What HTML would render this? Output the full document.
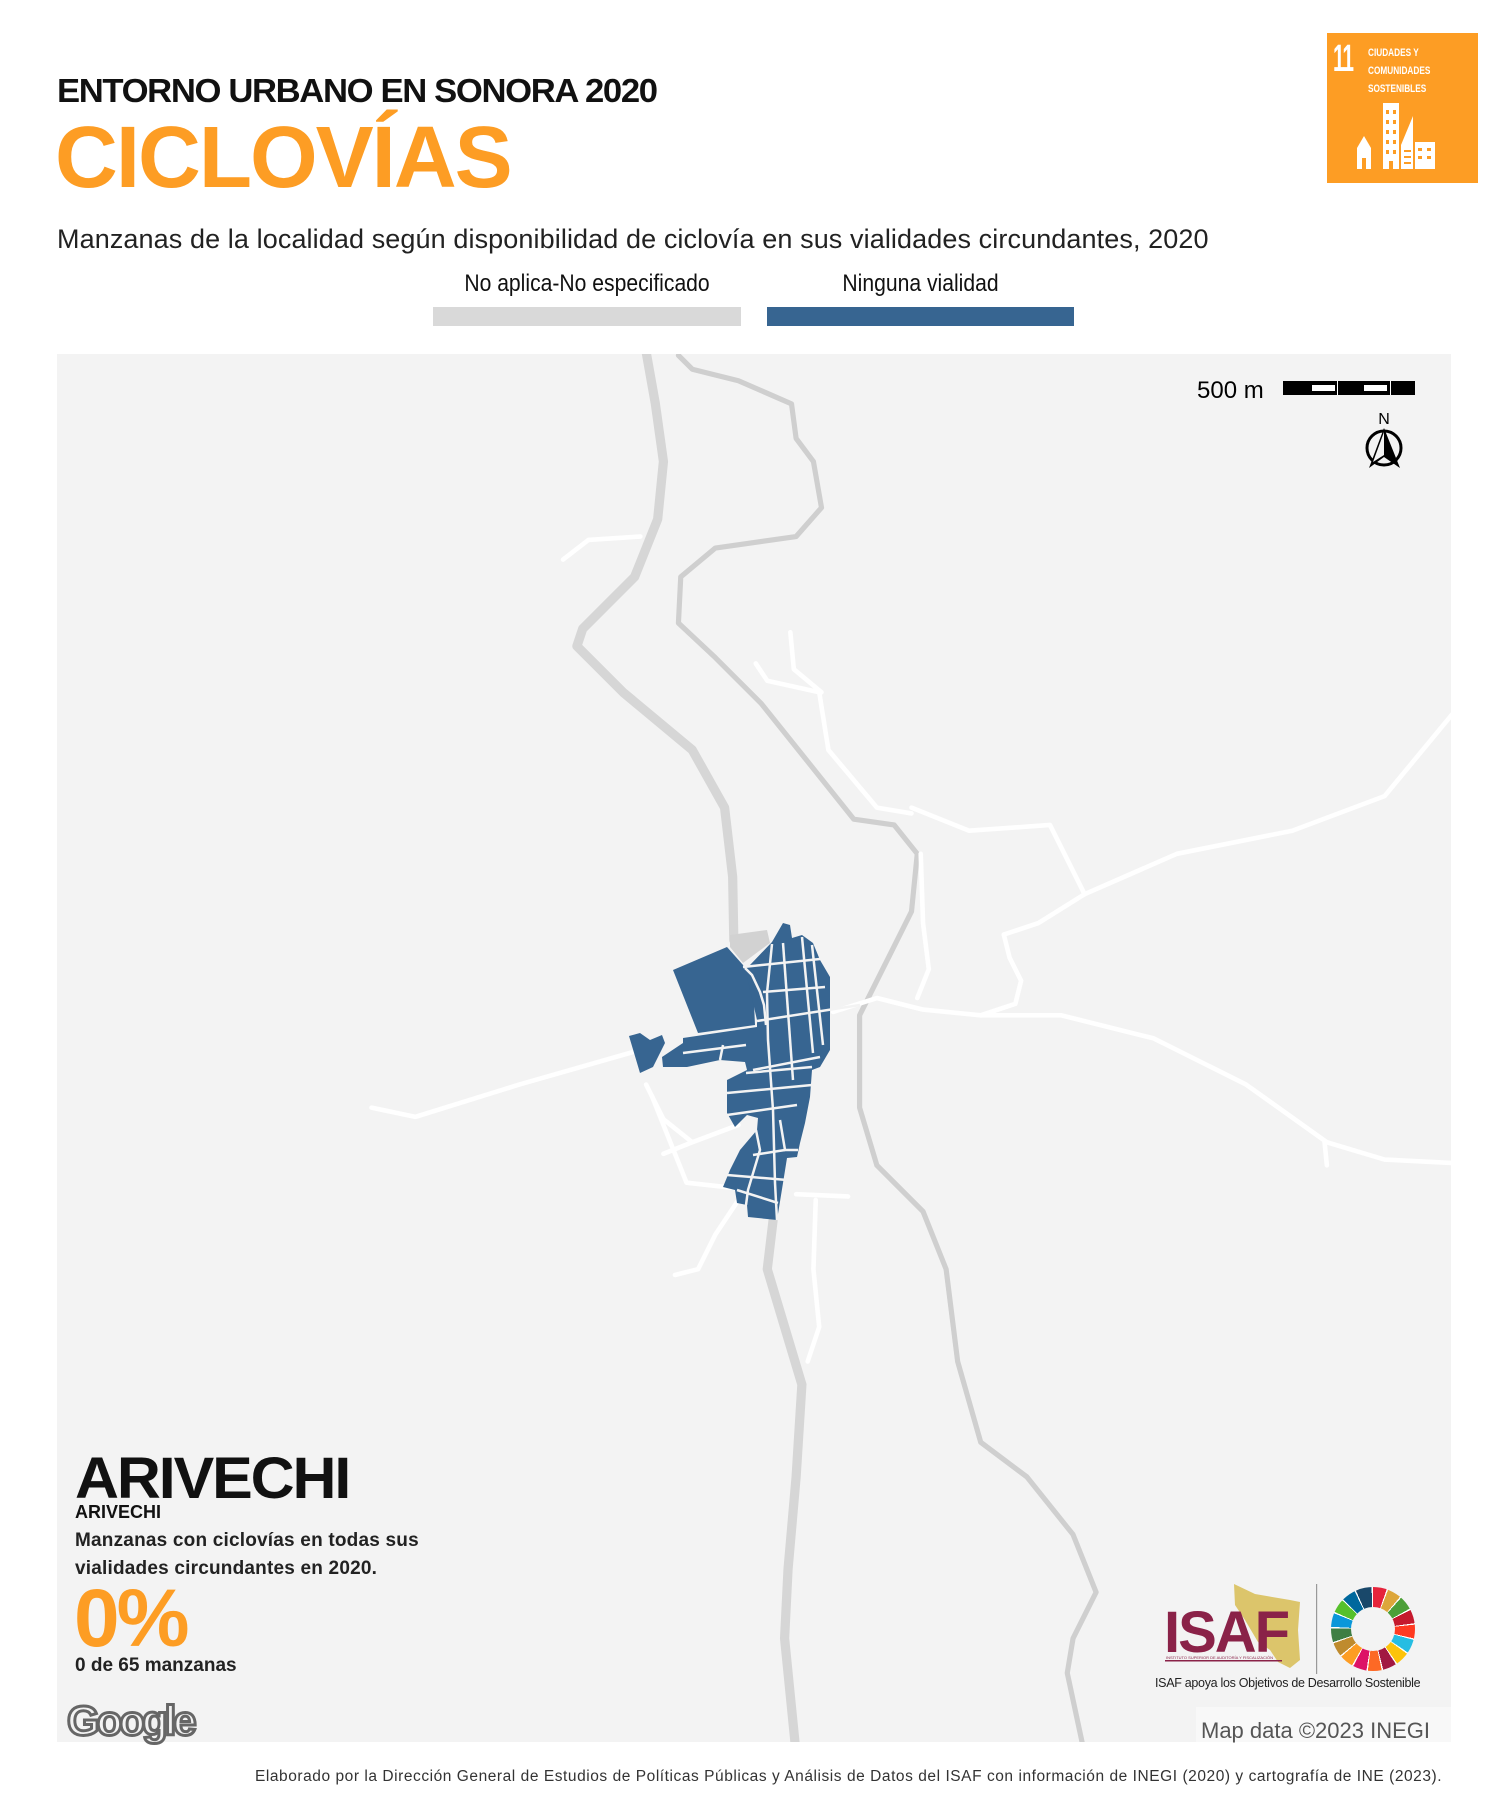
<!DOCTYPE html>
<html><head><meta charset="utf-8"><style>
*{margin:0;padding:0;box-sizing:border-box}
body{width:1500px;height:1800px;background:#fff;position:relative;overflow:hidden;font-family:"Liberation Sans",sans-serif}
.a{position:absolute;white-space:nowrap}
</style></head><body>
<div class="a" style="left:57px;top:72px;font-size:33px;font-weight:bold;letter-spacing:-1.3px;color:#111;transform:scaleX(1.05);transform-origin:left">ENTORNO URBANO EN SONORA 2020</div>
<div class="a" style="left:55px;top:108px;font-size:87px;font-weight:bold;letter-spacing:-2px;color:#fd9d24;line-height:100px">CICLOVÍAS</div>
<div class="a" style="left:57px;top:224px;font-size:27px;color:#222;letter-spacing:0.1px">Manzanas de la localidad según disponibilidad de ciclovía en sus vialidades circundantes, 2020</div>
<div class="a" style="left:433px;top:270px;width:308px;text-align:center;font-size:24px;color:#111;transform:scaleX(0.88)">No aplica-No especificado</div>
<div class="a" style="left:767px;top:270px;width:307px;text-align:center;font-size:24px;color:#111;transform:scaleX(0.88)">Ninguna vialidad</div>
<div class="a" style="left:433px;top:307px;width:308px;height:19px;background:#d9d9d9"></div>
<div class="a" style="left:767px;top:307px;width:307px;height:19px;background:#376591"></div>

<div class="a" style="left:1327px;top:33px;width:151px;height:150px;background:#fd9d24"></div>
<div class="a" style="left:1333px;top:38px;font-size:38px;font-weight:bold;color:#fff;transform:scaleX(0.55);transform-origin:left;letter-spacing:-2px">11</div>
<div class="a" style="left:1368px;top:44px;font-size:11px;line-height:18px;color:#fff;transform:scaleX(0.75);transform-origin:left;font-weight:bold">CIUDADES Y<br>COMUNIDADES<br>SOSTENIBLES</div>
<svg class="a" style="left:1355px;top:100px" width="100" height="72" viewBox="0 0 100 72">
<g fill="#fff"><rect x="28" y="3" width="16" height="66"/><polygon points="2,69 2,48 9,36 16,48 16,69"/><polygon points="46,69 46,45 58,16 58,69"/><rect x="60" y="42" width="20" height="27"/></g>
<g fill="#fd9d24"><rect x="31" y="10" width="3" height="4"/><rect x="38" y="10" width="3" height="4"/><rect x="31" y="20" width="3" height="4"/><rect x="38" y="20" width="3" height="4"/><rect x="31" y="30" width="3" height="4"/><rect x="38" y="30" width="3" height="4"/><rect x="31" y="40" width="3" height="4"/><rect x="38" y="40" width="3" height="4"/><rect x="31" y="50" width="3" height="4"/><rect x="38" y="50" width="3" height="4"/><rect x="34" y="61" width="4" height="8"/><rect x="7" y="58" width="4" height="11"/><rect x="49" y="50" width="7" height="2"/><rect x="49" y="56" width="7" height="2"/><rect x="49" y="62" width="7" height="2"/><rect x="63" y="48" width="4" height="3"/><rect x="72" y="48" width="4" height="3"/><rect x="63" y="56" width="4" height="3"/><rect x="72" y="56" width="4" height="3"/></g></svg>

<div class="a" style="left:57px;top:354px;width:1394px;height:1388px;background:#f3f3f3"></div>
<svg class="a" style="left:0;top:0" width="1500" height="1800" viewBox="0 0 1500 1800">
<defs><clipPath id="c"><rect x="57" y="354" width="1394" height="1388"/></clipPath></defs>
<g clip-path="url(#c)">
<g transform="scale(1.1538)" fill="none" stroke-linejoin="round" stroke-linecap="round">
<path d="M560 305 L568 350 L575 400 L570 450 L550 500 L505 545 L500 560 L540 600 L600 650 L628 700 L635 760 L636 815" stroke="#d6d6d6" stroke-width="8"/>
<path d="M670 1058 L665 1100 L680 1150 L695 1200 L690 1280 L683 1360 L680 1420 L690 1520" stroke="#d6d6d6" stroke-width="8"/>
<path d="M588 308 L600 320 L640 330 L686 350 L690 380 L705 400 L712 440 L690 465 L620 475 L590 500 L588 540 L620 570 L660 610 L700 660 L740 710 L775 715 L795 740 L790 790 L770 830 L745 880 L745 960 L760 1010 L800 1050 L820 1100 L830 1180 L850 1250 L890 1280 L930 1330 L950 1380 L930 1420 L925 1450 L940 1520" stroke="#cfcfcf" stroke-width="4.5"/>
<g stroke="#fff" stroke-width="4">
<path d="M322 960 L360 968 L450 940 L548 912"/>
<path d="M722 877 L760 865 L800 875 L850 880 L920 880 L1000 900 L1080 940 L1150 990 L1200 1005 L1260 1008"/>
<path d="M1148 990 L1150 1010"/>
<path d="M870 810 L900 800 L940 775 L1020 740 L1120 720 L1200 690 L1262 615"/>
<path d="M790 700 L840 720 L910 715 L940 775"/>
<path d="M655 575 L665 590 L710 600 L718 650 L760 700 L790 705"/>
<path d="M685 548 L688 580 L712 600"/>
<path d="M798 740 L800 800 L805 840 L795 865"/>
<path d="M870 810 L875 830 L885 850 L880 870 L850 880"/>
<path d="M488 485 L510 468 L555 465"/>
<path d="M560 940 L575 970 L600 990 L640 975"/>
<path d="M565 950 L595 1025 L640 1030"/>
<path d="M640 1040 L620 1070 L605 1100 L585 1105"/>
<path d="M690 1035 L735 1037"/>
<path d="M707 1040 L705 1100 L710 1150 L700 1180"/>
<path d="M600 990 L575 1000"/>
</g></g>
<g fill="#376591">
<polygon points="673,970 727,947 743,965 753,982 755,1025 698,1033"/>
<polygon points="629,1036 640,1033 650,1040 662,1035 665,1043 653,1067 640,1073"/>
<polygon points="772,942 783,923 790,925 792,938 802,935 813,943 820,960 830,977 830,1050 820,1067 812,1070 810,1097 805,1123 800,1143 797,1157 787,1158 783,1183 777,1220 748,1217 747,1205 737,1203 735,1190 723,1187 730,1170 740,1150 757,1130 758,1118 747,1115 735,1127 727,1113 727,1080 737,1075 747,1070 745,1062 720,1060 687,1067 663,1067 662,1057 683,1043 683,1038 757,1027 757,1020 745,968 750,965"/>
</g>
<polygon points="730,935 767,930 770,943 743,963 730,947" fill="#d2d2d2"/>
<g stroke="#f3f3f3" stroke-width="2.5" fill="none">
<path d="M745 968 L752 975 L760 992 L764 1005 L766 1025"/>
<path d="M772 944 L767 993 L768 1040 L773 1110 L775 1183 L777 1220"/>
<path d="M743 967 L820 959"/><path d="M763 992 L825 987"/><path d="M757 1021 L860 1005"/>
<path d="M683 1053 L746 1045"/><path d="M753 1070 L820 1057"/><path d="M746 1073 L812 1067"/>
<path d="M727 1093 L812 1085"/><path d="M727 1115 L797 1105"/><path d="M753 1155 L785 1150"/>
<path d="M727 1175 L787 1180"/><path d="M737 1190 L778 1203"/>
<path d="M802 937 L813 1053"/><path d="M783 943 L793 1080"/><path d="M812 945 L823 1045"/>
<path d="M720 1060 L723 1045"/><path d="M780 1120 L785 1150 L798 1150"/>
<path d="M756 1130 L760 1150 L748 1190 L746 1205"/>
</g>
</g>
<text x="1197" y="398" font-family="Liberation Sans" font-size="24" fill="#000">500 m</text>
<rect x="1283" y="381" width="132" height="14" fill="#000"/>
<rect x="1312" y="385" width="23" height="6" fill="#fff"/><rect x="1364" y="385" width="23" height="6" fill="#fff"/>
<rect x="1337" y="381" width="1" height="14" fill="#fff"/><rect x="1390" y="381" width="1" height="14" fill="#fff"/>
<text x="1384" y="424" text-anchor="middle" font-family="Liberation Sans" font-size="16" fill="#000">N</text>
<circle cx="1384" cy="448" r="17" fill="none" stroke="#000" stroke-width="3"/>
<polygon points="1384,428 1369,468 1384,457 1400,468" fill="#000"/>
<polygon points="1384,432 1373,462 1384,455" fill="#f3f3f3"/>
</svg>

<div class="a" style="left:75px;top:1445px;font-size:58px;font-weight:bold;letter-spacing:-2px;color:#111;transform:scaleX(1.05);transform-origin:left">ARIVECHI</div>
<div class="a" style="left:75px;top:1502px;font-size:18px;font-weight:bold;color:#111">ARIVECHI</div>
<div class="a" style="left:75px;top:1527px;font-size:19px;line-height:28px;font-weight:bold;color:#222;letter-spacing:0.2px">Manzanas con ciclovías en todas sus<br>vialidades circundantes en 2020.</div>
<div class="a" style="left:74px;top:1572px;font-size:82px;font-weight:bold;color:#fd9d24;letter-spacing:-3px">0%</div>
<div class="a" style="left:75px;top:1655px;font-size:19px;font-weight:bold;color:#222">0 de 65 manzanas</div>
<div class="a" style="left:67px;top:1697px;font-size:42px;font-weight:bold;color:#f3f3f3;-webkit-text-stroke:3px #666;letter-spacing:-3px">Google</div>

<svg class="a" style="left:1150px;top:1580px" width="300" height="100" viewBox="0 0 300 100">
<path d="M84 4 L105 14 L140 20 L150 22 L148 50 L150 80 L140 88 L128 82 L120 70 L108 62 L95 40 L85 25 Z" fill="#dcc56b"/>
<text x="14" y="72" font-family="Liberation Sans" font-weight="bold" font-size="58" fill="#8a2248" letter-spacing="-2">ISAF</text>
<rect x="15" y="80" width="117" height="1.5" fill="#8a2248"/>
<text x="16" y="79" font-family="Liberation Sans" font-size="4" fill="#8a2248">INSTITUTO SUPERIOR DE AUDITORÍA Y FISCALIZACIÓN</text>
<rect x="166" y="4" width="1.2" height="90" fill="#999"/>
</svg>
<div class="a" style="left:1331px;top:1587px;width:84px;height:84px;border-radius:50%;background:conic-gradient(#e5243b 0 19deg,#fff 19deg 21deg,#dda63a 21deg 40deg,#fff 40deg 42deg,#4c9f38 42deg 61deg,#fff 61deg 63deg,#c5192d 63deg 82deg,#fff 82deg 84deg,#ff3a21 84deg 103deg,#fff 103deg 105deg,#26bde2 105deg 124deg,#fff 124deg 126deg,#fcc30b 126deg 145deg,#fff 145deg 147deg,#a21942 147deg 166deg,#fff 166deg 168deg,#fd6925 168deg 187deg,#fff 187deg 189deg,#dd1367 189deg 208deg,#fff 208deg 210deg,#fd9d24 210deg 229deg,#fff 229deg 231deg,#bf8b2e 231deg 250deg,#fff 250deg 252deg,#3f7e44 252deg 271deg,#fff 271deg 273deg,#0a97d9 273deg 292deg,#fff 292deg 294deg,#56c02b 294deg 313deg,#fff 313deg 315deg,#00689d 315deg 334deg,#fff 334deg 336deg,#19486a 336deg 358deg,#fff 358deg 360deg)"></div>
<div class="a" style="left:1351px;top:1607px;width:44px;height:44px;border-radius:50%;background:#f3f3f3"></div>
<div class="a" style="left:1155px;top:1676px;font-size:12.5px;color:#222;letter-spacing:-0.3px">ISAF apoya los Objetivos de Desarrollo Sostenible</div>
<div class="a" style="left:1196px;top:1707px;width:255px;height:35px;background:#f8f8f8"></div>
<div class="a" style="left:1201px;top:1718px;font-size:22px;color:#555">Map data ©2023 INEGI</div>
<div class="a" style="left:255px;top:1768px;font-size:15.5px;color:#333;letter-spacing:0.55px">Elaborado por la Dirección General de Estudios de Políticas Públicas y Análisis de Datos del ISAF con información de INEGI (2020) y cartografía de INE (2023).</div>
</body></html>
